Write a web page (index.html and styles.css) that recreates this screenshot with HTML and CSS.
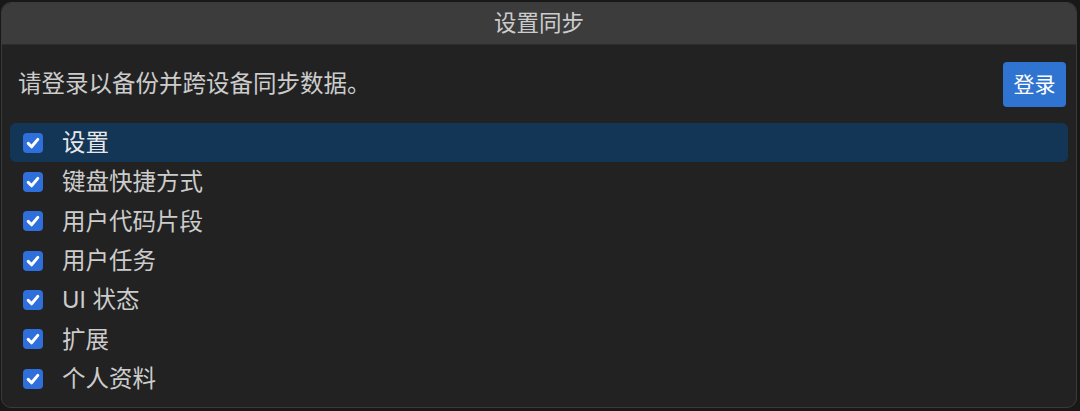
FILE: index.html
```html
<!DOCTYPE html>
<html lang="zh-CN">
<head>
<meta charset="utf-8">
<title>设置同步</title>
<link rel="stylesheet" href="styles.css">
</head>
<body>
<div class="dialog">
  <div class="titlebar">设置同步</div>
  <div class="header">
    <div class="desc">请登录以备份并跨设备同步数据。</div>
    <button class="login">登录</button>
  </div>
  <ul class="list">
    <li class="item active"><span class="cb"><svg viewBox="0 0 20 20"><path d="M5.2 10.4 L8.6 13.8 L14.8 6.4" /></svg></span><span class="label">设置</span></li>
    <li class="item"><span class="cb"><svg viewBox="0 0 20 20"><path d="M5.2 10.4 L8.6 13.8 L14.8 6.4" /></svg></span><span class="label">键盘快捷方式</span></li>
    <li class="item"><span class="cb"><svg viewBox="0 0 20 20"><path d="M5.2 10.4 L8.6 13.8 L14.8 6.4" /></svg></span><span class="label">用户代码片段</span></li>
    <li class="item"><span class="cb"><svg viewBox="0 0 20 20"><path d="M5.2 10.4 L8.6 13.8 L14.8 6.4" /></svg></span><span class="label">用户任务</span></li>
    <li class="item"><span class="cb"><svg viewBox="0 0 20 20"><path d="M5.2 10.4 L8.6 13.8 L14.8 6.4" /></svg></span><span class="label">UI 状态</span></li>
    <li class="item"><span class="cb"><svg viewBox="0 0 20 20"><path d="M5.2 10.4 L8.6 13.8 L14.8 6.4" /></svg></span><span class="label">扩展</span></li>
    <li class="item"><span class="cb"><svg viewBox="0 0 20 20"><path d="M5.2 10.4 L8.6 13.8 L14.8 6.4" /></svg></span><span class="label">个人资料</span></li>
  </ul>
</div>
</body>
</html>
```
FILE: styles.css
```css
* { box-sizing: border-box; }
html, body {
  margin: 0;
  padding: 0;
  background: #181818;
  height: 411px;
  overflow: hidden;
  font-family: Inter, "Noto Sans CJK SC", sans-serif;
  color: #cccccc;
}
.dialog {
  margin: 2px 3px 0 1px;
  height: 406px;
  background: #222222;
  border: 1px solid #3a3a3a;
  border-radius: 10px;
  overflow: hidden;
  display: flex;
  flex-direction: column;
}
.titlebar {
  height: 42px;
  flex: none;
  background: #3c3c3c;
  border-bottom: 1px solid #2c2c2c;
  display: flex;
  align-items: center;
  justify-content: center;
  font-size: 22.5px;
  line-height: 1;
  color: #cccccc;
}
.header {
  display: flex;
  align-items: center;
  justify-content: space-between;
  padding: 17px 10px 0 16px;
  height: 61px;
  flex: none;
}
.desc {
  font-size: 23.5px;
  line-height: 1;
  color: #cccccc;
}
.login {
  width: 63px;
  height: 45px;
  border: none;
  border-radius: 4px;
  background: #2f74d0;
  color: #ffffff;
  font-family: inherit;
  font-size: 21px;
  line-height: 1;
  padding: 0;
}
.list {
  list-style: none;
  margin: 17px 0 0 0;
  padding: 0 8px 0 8px;
}
.item {
  height: 39.33px;
  display: flex;
  align-items: center;
  padding-left: 13px;
  gap: 19px;
  border-radius: 6px;
}
.item.active {
  background: #143656;
}
.item.active .label { color: #e8e8e8; }
.cb {
  width: 20px;
  height: 20px;
  border-radius: 4px;
  background: #2f6fdc;
  display: flex;
  flex: none;
}
.cb svg {
  width: 20px;
  height: 20px;
}
.cb path {
  fill: none;
  stroke: #ffffff;
  stroke-width: 3;
  stroke-linecap: round;
  stroke-linejoin: round;
}
.label {
  font-size: 23.5px;
  line-height: 1;
  color: #cccccc;
}
```
